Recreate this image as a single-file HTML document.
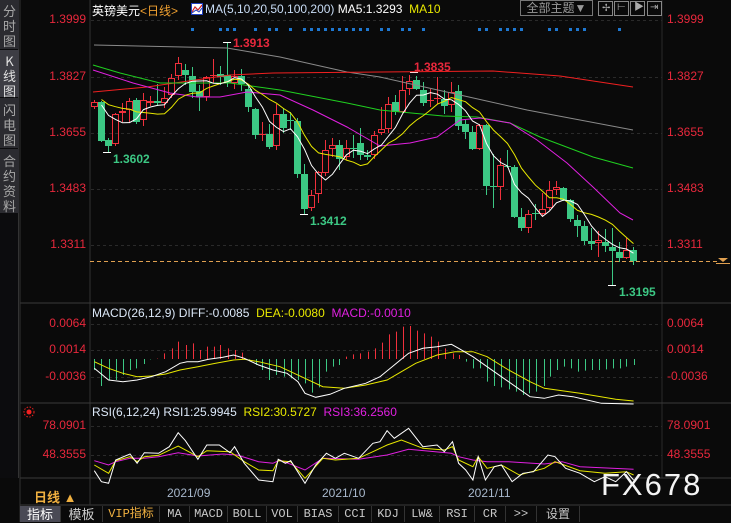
<!DOCTYPE html>
<html><head><meta charset="utf-8">
<style>
*{margin:0;padding:0;box-sizing:border-box}
body{width:731px;height:522px;background:#0a0a0a;overflow:hidden;position:relative;font-family:"Liberation Sans","Noto Sans CJK SC",sans-serif;}
.a{position:absolute;white-space:nowrap}
.side{position:absolute;left:0;top:0;width:19px;height:478px;background:#0c0c0e;border-right:1px solid #333}
.tab{position:absolute;left:0;width:19px;background:#2b2b30;color:#a8a8a8;font-size:13px;line-height:15px;text-align:center;font-family:"Noto Sans CJK SC",sans-serif}
.lab{position:absolute;font-size:12px;color:#e8283c;text-align:right;width:70px;left:16px}
.rl{position:absolute;font-size:12px;color:#e8283c;left:667px}
.bt{position:absolute;top:506px;height:16px;font-size:12px;line-height:16px;color:#c8c8c8;text-align:center;border-right:1px solid #333;font-family:"Liberation Mono","Noto Sans CJK SC",monospace}
.ic{position:absolute;top:1px;width:15px;height:15px;border:1px solid #888}
</style></head><body>
<svg id="g" width="731" height="522" style="position:absolute;left:0;top:0"></svg>

<div class="side"></div>
<div class="tab" style="top:0;height:49px;padding-top:3px">分<br>时<br>图</div>
<div class="tab" style="top:50px;height:47px;background:#3d3d44;color:#e0e0e0;padding-top:3px">K<br>线<br>图</div>
<div class="tab" style="top:98px;height:50px;padding-top:4px">闪<br>电<br>图</div>
<div class="tab" style="top:149px;height:64px;padding-top:4px">合<br>约<br>资<br>料</div>

<div class="a" style="left:92px;top:2px;font-size:12px;color:#fff;font-family:'Liberation Sans','Noto Sans CJK SC',sans-serif">英镑美元<span style="color:#f0a030">&lt;日线&gt;</span></div>
<div class="a" style="left:191px;top:3px;width:12px;height:12px;background:#fff;border:1px solid #2040c0"><svg width="10" height="10" style="position:absolute;left:0;top:0"><polyline points="0,8 3,3 6,6 10,1" fill="none" stroke="#d02020" stroke-width="1.2"/><polyline points="0,9 4,6 7,8 10,4" fill="none" stroke="#2040c0"/></svg></div>
<div class="a" style="left:205px;top:2px;font-size:12px;color:#c8dcf5">MA(5,10,20,50,100,200) <span style="color:#fff">MA5:1.3293</span>&nbsp; <span style="color:#e8e800">MA10</span></div>

<div class="a" style="left:520px;top:0;width:73px;height:16px;border:1px solid #777;color:#999;font-size:12px;line-height:14px;text-align:center">全部主题▼</div>
<div class="ic" style="left:598px"></div><div class="ic" style="left:614px"></div><div class="ic" style="left:630px"></div><div class="ic" style="left:647px"></div>
<div class="a" style="left:602px;top:4px;color:#aaa;font-size:10px;line-height:10px">✢</div>
<div class="a" style="left:617px;top:3px;color:#aaa;font-size:10px;line-height:10px">⊢</div>
<div class="a" style="left:634px;top:3px;color:#aaa;font-size:10px;line-height:10px">▶</div>
<div class="a" style="left:650px;top:3px;color:#aaa;font-size:10px;line-height:10px">⇥</div>

<div class="lab" style="top:12px">1.3999</div>
<div class="lab" style="top:69px">1.3827</div>
<div class="lab" style="top:125px">1.3655</div>
<div class="lab" style="top:181px">1.3483</div>
<div class="lab" style="top:237px">1.3311</div>
<div class="rl" style="top:12px">1.3999</div>
<div class="rl" style="top:69px">1.3827</div>
<div class="rl" style="top:125px">1.3655</div>
<div class="rl" style="top:181px">1.3483</div>
<div class="rl" style="top:237px">1.3311</div>

<div class="a" style="left:233px;top:36px;font-size:12px;font-weight:bold;color:#e8283c">1.3913</div>
<div class="a" style="left:414px;top:60px;font-size:12px;font-weight:bold;color:#e8283c">1.3835</div>
<div class="a" style="left:113px;top:152px;font-size:12px;font-weight:bold;color:#3cc884">1.3602</div>
<div class="a" style="left:310px;top:214px;font-size:12px;font-weight:bold;color:#3cc884">1.3412</div>
<div class="a" style="left:619px;top:285px;font-size:12px;font-weight:bold;color:#3cc884">1.3195</div>

<div class="a" style="left:92px;top:306px;font-size:12px;color:#dce8f8">MACD(26,12,9) DIFF:-0.0085 &nbsp;<span style="color:#e8e800">DEA:-0.0080</span> &nbsp;<span style="color:#e020e0">MACD:-0.0010</span></div>
<div class="lab" style="top:316px">0.0064</div>
<div class="lab" style="top:342px">0.0014</div>
<div class="lab" style="top:369px">-0.0036</div>
<div class="rl" style="top:316px">0.0064</div>
<div class="rl" style="top:342px">0.0014</div>
<div class="rl" style="top:369px">-0.0036</div>

<div class="a" style="left:92px;top:405px;font-size:12px;color:#dce8f8">RSI(6,12,24) RSI1:25.9945 &nbsp;<span style="color:#e8e800">RSI2:30.5727</span> &nbsp;<span style="color:#e020e0">RSI3:36.2560</span></div>
<div class="lab" style="top:418px">78.0901</div>
<div class="lab" style="top:447px">48.3555</div>
<div class="rl" style="top:418px">78.0901</div>
<div class="rl" style="top:447px">48.3555</div>

<div class="a" style="left:34px;top:487px;font-size:13px;font-weight:bold;color:#f0b040">日线 ▲</div>
<div class="a" style="left:167px;top:486px;font-size:12px;color:#a8b8cc">2021/09</div>
<div class="a" style="left:322px;top:486px;font-size:12px;color:#a8b8cc">2021/10</div>
<div class="a" style="left:468px;top:486px;font-size:12px;color:#a8b8cc">2021/11</div>
<div class="a" style="left:601px;top:467px;font-size:31px;color:#f4f4f4;letter-spacing:2px">FX678</div>

<div class="bt" style="left:20px;width:41px;background:#4a4a55;color:#fff;font-family:'Noto Sans CJK SC',sans-serif;font-size:13px">指标</div>
<div class="bt" style="left:61px;width:42px;color:#ccc;font-family:'Noto Sans CJK SC',sans-serif;font-size:13px">模板</div>
<div class="bt" style="left:103px;width:57px;color:#f0b040">VIP指标</div>
<div class="bt" style="left:160px;width:30px">MA</div>
<div class="bt" style="left:190px;width:38px">MACD</div>
<div class="bt" style="left:228px;width:39px">BOLL</div>
<div class="bt" style="left:267px;width:31px">VOL</div>
<div class="bt" style="left:298px;width:41px">BIAS</div>
<div class="bt" style="left:339px;width:33px">CCI</div>
<div class="bt" style="left:372px;width:33px">KDJ</div>
<div class="bt" style="left:405px;width:35px">LW&amp;</div>
<div class="bt" style="left:440px;width:35px">RSI</div>
<div class="bt" style="left:475px;width:31px">CR</div>
<div class="bt" style="left:506px;width:31px">&gt;&gt;</div>
<div class="bt" style="left:537px;width:43px;font-family:'Noto Sans CJK SC',sans-serif">设置</div>

<script>
var S=document.getElementById('g'),h='';
function L(x1,y1,x2,y2,c,w,d){h+='<line x1="'+x1+'" y1="'+y1+'" x2="'+x2+'" y2="'+y2+'" stroke="'+c+'" stroke-width="'+(w||1)+'"'+(d?' stroke-dasharray="'+d+'"':'')+'/>';}
function P(pts,c,w){h+='<polyline points="'+pts.map(p=>p[0].toFixed(1)+','+p[1].toFixed(1)).join(' ')+'" fill="none" stroke="'+c+'" stroke-width="'+(w||1)+'"/>';}
// frames
L(90,0,90,478,'#333');L(662,0,662,478,'#2a2a2a');
L(20,303,731,303,'#3a3a3a');L(20,403,731,403,'#3a3a3a');L(20,478,731,478,'#3a3a3a');L(20,505,731,505,'#3a3a3a');
L(90,478,90,505,'#333');L(20,0,20,522,'#333');
[20,77,133,189,245,324,350,377,426,455].forEach(y=>L(91,y+0.5,662,y+0.5,'#2a2a2a',1,'3,3'));
L(90,261.5,720,261.5,'#e0a050',1,'4,3');
h+='<polygon points="718,258 728,258 723,262" fill="#e0a050"/>';L(716,263.5,730,263.5,'#e0a050');
// candles [o,c,h,l]
var C=[[107,102,100,109],[102,141,101,142],[140,146,138,152],[144,114,113,146],[113,111,103,122],[110,101,98,122],[100,122,98,124],[120,100,93,126],[103,101,96,106],[101,103,84,106],[103,98,87,108],[95,78,74,98],[76,63,57,80],[70,75,64,85],[76,92,67,98],[91,97,85,111],[97,77,76,101],[76,75,59,83],[74,77,66,85],[75,83,43,87],[83,76,70,89],[76,84,69,91],[89,107,84,112],[109,135,108,139],[135,134,122,141],[134,147,124,149],[146,114,104,150],[114,128,108,133],[120,121,112,130],[121,174,118,178],[174,209,164,214],[208,195,190,211],[194,172,171,203],[173,150,140,176],[149,145,138,157],[145,159,140,170],[157,148,140,160],[148,149,135,158],[143,155,128,160],[155,157,150,160],[155,135,131,159],[133,129,107,135],[129,104,97,133],[102,112,95,115],[112,90,76,113],[89,81,75,95],[80,89,76,90],[90,103,82,106],[101,100,89,107],[99,98,77,104],[99,106,90,114],[105,92,82,112],[91,126,85,130],[124,132,120,139],[132,149,126,150],[149,125,124,150],[125,186,124,195],[186,187,154,208],[187,165,158,200],[166,167,150,168],[167,217,165,218],[217,228,208,231],[228,214,210,233],[213,214,204,220],[214,209,193,216],[208,190,181,210],[190,187,181,195],[188,200,187,201],[200,219,199,222],[220,226,215,237],[226,241,221,245],[241,244,228,250],[243,240,231,257],[242,246,229,252],[247,251,228,285],[252,258,242,262],[258,250,238,259],[250,261,247,265]];
function X(i){return 94+i*7;}
var R='#f0303c',G='#3cc884';
C.forEach((c,i)=>{var x=X(i),up=c[1]<c[0],col=up?R:G,t=Math.min(c[0],c[1]),b=Math.max(c[0],c[1]);
 L(x+.5,c[2],x+.5,t,col);L(x+.5,b,x+.5,c[3],col);
 if(b-t<1.5){L(x-3,t+.5,x+4,t+.5,col);}
 else if(up)h+='<rect x="'+(x-2.5)+'" y="'+(t+.5)+'" width="6" height="'+(b-t-1)+'" fill="none" stroke="'+col+'"/>';
 else h+='<rect x="'+(x-3)+'" y="'+t+'" width="7" height="'+(b-t)+'" fill="'+col+'"/>';});
// low/high markers
[[227,42],[414,72],[107,152],[304,214],[612,285]].forEach(m=>L(m[0]-4,m[1]+.5,m[0]+4,m[1]+.5,'#fff'));
// MAs
function ma(n){return C.map((c,i)=>{var s=0,k=0;for(var j=Math.max(0,i-n+1);j<=i;j++){s+=C[j][1];k++;}var pad=n-k;s+=pad*(i<n?(C[0][1]-8):0);return [X(i)+.5,s/n];});}
P([[94,45],[227,48],[280,57],[347,72],[380,77],[460,95],[527,110],[633,130]],'#8a8a8a');
P([[93,92],[147,87],[230,75],[273,73],[380,72],[493,71],[560,76],[633,87]],'#f02020');
P([[93,65],[120,73],[160,83],[230,83],[280,90],[347,103],[380,110],[443,116],[477,117],[510,123],[540,137],[593,157],[633,168]],'#20d020');
P([[93,70],[133,83],[170,93],[197,97],[220,97],[247,92],[280,95],[313,110],[347,127],[380,146],[410,143],[437,137],[460,120],[480,118],[510,123],[537,140],[567,163],[593,187],[620,213],[633,220]],'#e020e0');
P(ma(10).slice(1),'#e8e800');
P(ma(5).slice(1),'#fff');
// blue dots
[14,18,19,20,23,25,26,28,30,31,32,33,34,35,36,37,38,39,41,42,44,45,47,55,56,58,59,60,61,65,66,68,69,70,75].forEach(i=>h+='<rect x="'+(X(i)-1)+'" y="28" width="3" height="3" fill="#1e78d2"/>');
// MACD
function cv(a){return a.map(p=>[80+p[0]/2.8,300+p[1]/3]);}
var hb=[[40,210],[60,258],[80,242],[100,240],[120,225],[140,210],[158,205],[178,192],[197,178],[215,176],[235,160],[258,145],[275,125],[297,135],[315,130],[335,150],[355,140],[375,140],[393,135],[413,145],[433,150],[453,158],[473,178],[493,195],[510,210],[530,240],[550,225],[570,230],[590,235],[610,240],[630,250],[650,278],[668,262],[688,215],[708,200],[726,195],[745,170],[765,163],[785,160],[805,155],[825,145],[845,128],[865,103],[885,95],[903,80],[923,78],[943,92],[963,100],[983,110],[1003,125],[1023,145],[1043,160],[1060,165],[1080,185],[1100,205],[1120,205],[1140,245],[1160,258],[1180,262],[1200,268],[1220,275],[1240,285],[1258,280],[1278,275],[1298,258],[1315,230],[1335,210],[1355,200],[1375,205],[1395,215],[1413,212],[1433,210],[1453,210],[1473,208],[1493,205],[1512,205],[1530,200],[1550,195]];
var z=359;cv(hb).forEach(p=>{var x=Math.round(p[0])+.5;L(x,z,x,p[1],p[1]<z?'#f0303c':'#3cc884');});
P(cv([[40,185],[80,205],[120,220],[160,230],[200,228],[240,222],[280,210],[330,200],[380,190],[430,180],[460,178],[500,185],[560,200],[620,230],[680,260],[740,265],[800,255],[860,240],[900,215],[940,190],[1000,165],[1050,155],[1100,155],[1140,170],[1200,210],[1260,245],[1300,265],[1400,280],[1500,298],[1550,303]]),'#e8e800');
P(cv([[40,205],[80,240],[120,245],[160,240],[200,230],[240,215],[280,190],[300,185],[330,185],[360,178],[400,172],[430,165],[460,175],[500,195],[540,210],[580,220],[610,245],[630,280],[660,292],[700,283],[740,265],[800,250],[840,230],[880,195],[920,160],[960,145],[1000,140],[1040,133],[1060,145],[1100,170],[1140,200],[1180,230],[1220,260],[1260,290],[1300,295],[1340,285],[1380,290],[1420,300],[1460,310],[1550,312]]),'#fff');
// RSI
P(cv([[40,482],[80,495],[100,485],[140,475],[180,475],[220,470],[275,458],[330,468],[400,462],[440,465],[500,485],[540,490],[560,480],[630,510],[680,475],[780,478],[860,465],[920,448],[1040,460],[1060,470],[1100,480],[1140,485],[1200,485],[1300,492],[1350,485],[1400,500],[1550,508]]),'#e020e0');
P(cv([[40,495],[80,520],[100,482],[140,470],[160,485],[180,470],[220,466],[275,438],[330,470],[355,452],[420,455],[460,485],[500,510],[540,512],[555,482],[590,485],[630,535],[680,475],[715,480],[780,475],[820,455],[860,435],[900,420],[960,445],[1020,450],[1043,440],[1060,480],[1100,500],[1115,470],[1140,505],[1180,495],[1230,525],[1300,505],[1330,485],[1400,512],[1470,520],[1530,515],[1550,525]]),'#e8e800');
P(cv([[40,512],[60,545],[80,550],[100,480],[140,462],[160,490],[180,458],[220,460],[250,440],[275,398],[295,422],[330,478],[355,435],[390,435],[420,458],[433,440],[460,490],[500,540],[540,545],[555,478],[575,490],[590,482],[630,550],[660,495],[690,460],[715,475],[740,460],[780,475],[820,430],[840,425],[860,392],[880,415],[920,385],[960,440],[1000,435],[1020,455],[1043,425],[1060,490],[1080,510],[1100,540],[1115,470],[1135,540],[1160,500],[1180,495],[1210,545],[1240,520],[1270,515],[1310,465],[1330,470],[1360,505],[1400,520],[1440,545],[1470,530],[1500,545],[1530,515],[1550,540]]),'#fff');
// sun icon
h+='<circle cx="29" cy="412" r="2.5" fill="#f02020"/><circle cx="29" cy="412" r="5" fill="none" stroke="#f02020" stroke-dasharray="1.5,1.5"/>';
S.innerHTML=h;
</script>
</body></html>
